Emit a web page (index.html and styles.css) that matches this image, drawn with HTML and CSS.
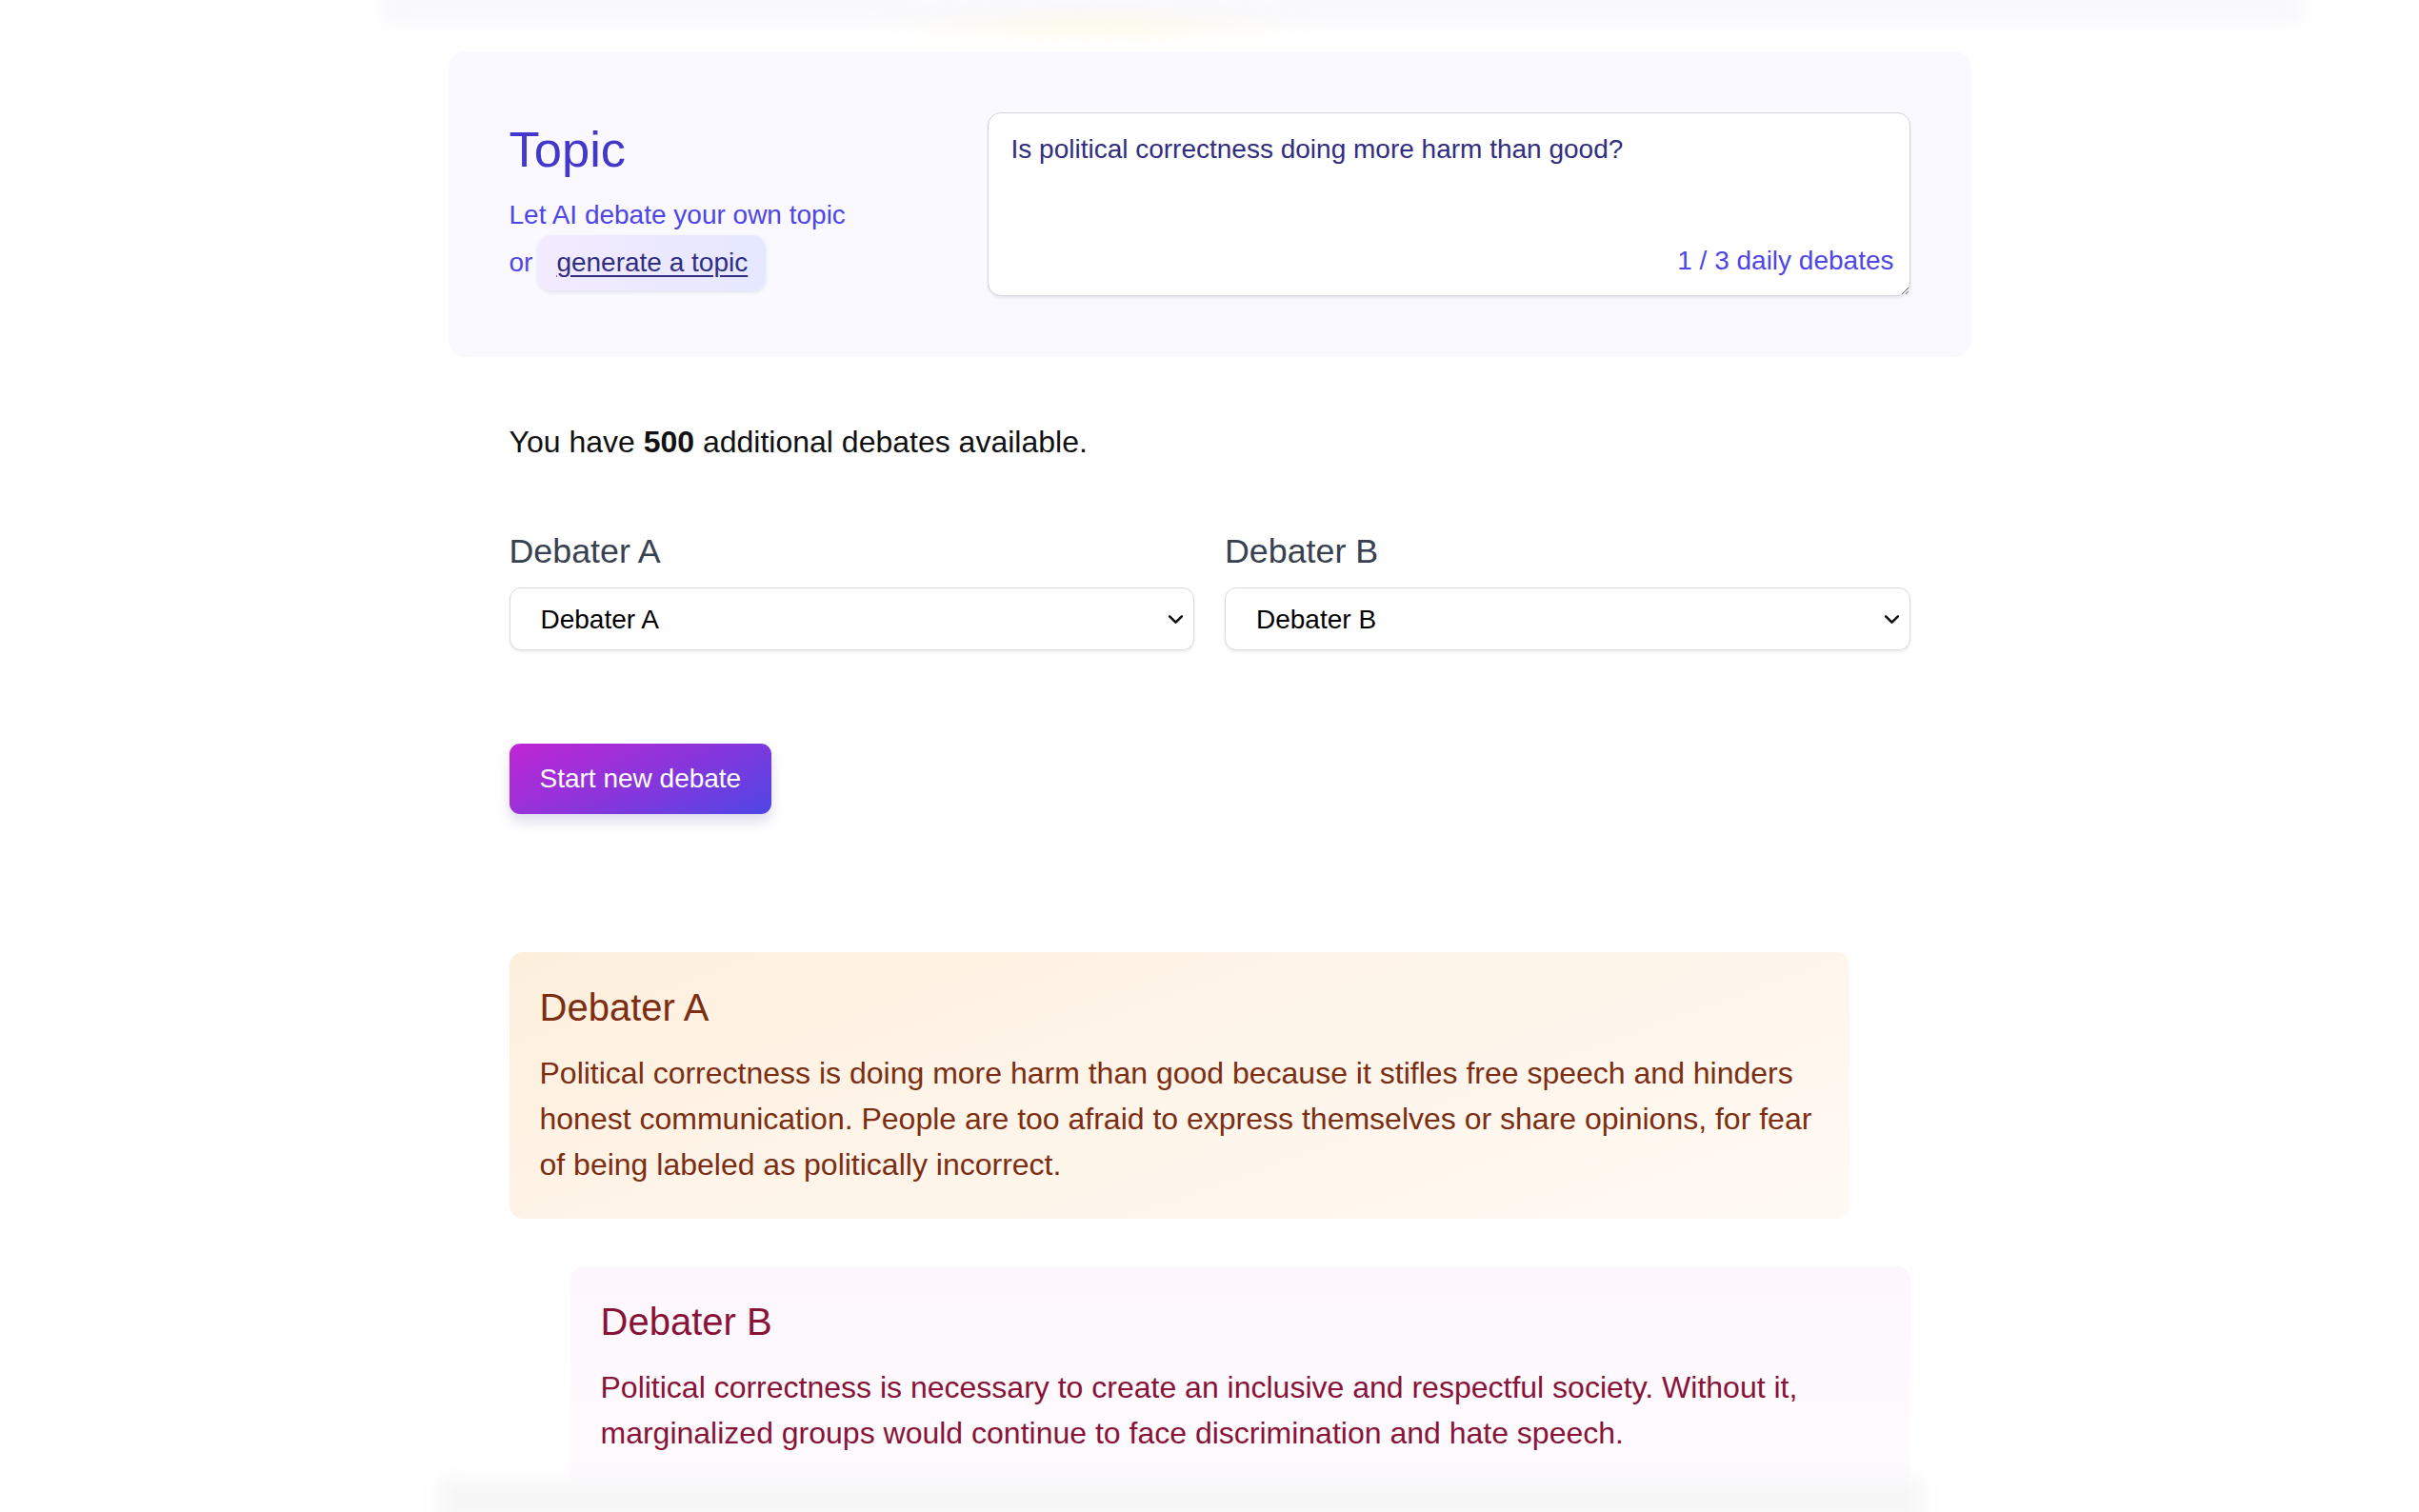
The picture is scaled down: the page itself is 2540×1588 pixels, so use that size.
FILE: index.html
```html
<!DOCTYPE html>
<html lang="en">
<head>
<meta charset="utf-8">
<title>AI Debate</title>
<link rel="stylesheet" href="styles.css">
</head>
<body>
<div class="top-blur"><div class="blob"></div></div>
<main class="page">
  <section class="topic-card">
    <div class="topic-intro">
      <h1 class="topic-title">Topic</h1>
      <p class="topic-sub">Let AI debate your own topic</p>
      <div class="topic-or"><span>or</span><a class="gen-pill" href="#">generate a topic</a></div>
    </div>
    <div class="topic-box">
      <textarea class="topic-input">Is political correctness doing more harm than good?</textarea>
      <span class="daily">1 / 3 daily debates</span>
    </div>
  </section>

  <p class="credits">You have <b>500</b> additional debates available.</p>

  <div class="debaters">
    <div class="field">
      <label class="field-label">Debater A</label>
      <div class="select-wrap">
        <select class="select"><option>Debater A</option></select>
        <svg class="chev" viewBox="0 0 16 10" width="16" height="10"><path d="M2 2 L8 8 L14 2" fill="none" stroke="#111" stroke-width="2.4" stroke-linecap="round" stroke-linejoin="round"/></svg>
      </div>
    </div>
    <div class="field">
      <label class="field-label">Debater B</label>
      <div class="select-wrap">
        <select class="select"><option>Debater B</option></select>
        <svg class="chev" viewBox="0 0 16 10" width="16" height="10"><path d="M2 2 L8 8 L14 2" fill="none" stroke="#111" stroke-width="2.4" stroke-linecap="round" stroke-linejoin="round"/></svg>
      </div>
    </div>
  </div>

  <button class="start-btn">Start new debate</button>

  <section class="transcript">
    <article class="turn turn-a">
      <h2 class="turn-name">Debater A</h2>
      <p class="turn-text">Political correctness is doing more harm than good because it stifles free speech and hinders honest communication. People are too afraid to express themselves or share opinions, for fear of being labeled as politically incorrect.</p>
    </article>
    <article class="turn turn-b">
      <h2 class="turn-name">Debater B</h2>
      <p class="turn-text">Political correctness is necessary to create an inclusive and respectful society. Without it, marginalized groups would continue to face discrimination and hate speech.</p>
    </article>
  </section>
</main>
<div class="bottom-blur"></div>
</body>
</html>
```

FILE: styles.css
```css
* { box-sizing: border-box; }
html, body { margin: 0; padding: 0; background: #ffffff; }
body {
  font-family: "Liberation Sans", Arial, sans-serif;
  color: #111;
  height: 1588px;
  overflow: hidden;
}

.top-blur {
  position: fixed;
  top: -6px;
  left: 400px;
  right: 120px;
  height: 40px;
  background: linear-gradient(180deg, #f7f7fb 0%, #f9f9fc 60%, rgba(255,255,255,0) 100%);
  filter: blur(10px);
  z-index: 5;
}
.top-blur .blob {
  position: absolute;
  left: 520px;
  top: 22px;
  width: 460px;
  height: 24px;
  background: radial-gradient(ellipse at center, rgba(255,246,214,0.9), rgba(255,255,255,0) 70%);
}

.page {
  width: 1471px;
  margin: 0 auto;
  padding-top: 54px;
}

.topic-card {
  margin: 0 -64px;
  padding: 64px;
  background: #f9f9ff;
  border-radius: 18px;
  display: grid;
  grid-template-columns: 1fr 969px;
  align-items: center;
}

.topic-intro { display: flex; flex-direction: column; }
.topic-title {
  margin: 0 0 17px;
  font-size: 52.5px;
  line-height: 63px;
  font-weight: 400;
  color: #4338ca;
}
.topic-sub {
  margin: 0;
  font-size: 28px;
  line-height: 42px;
  color: #4f46e5;
}
.topic-or {
  display: flex;
  align-items: center;
  gap: 6px;
  font-size: 28px;
  line-height: 42px;
  color: #4f46e5;
}
.gen-pill {
  display: inline-block;
  padding: 8px 19px;
  border-radius: 14px;
  background: linear-gradient(90deg, #f3ebff 0%, #e5e8ff 100%);
  box-shadow: 0 2px 4px rgba(60, 60, 120, 0.12);
  color: #312e81;
  text-decoration: underline;
  text-underline-offset: 4px;
  text-decoration-thickness: 2px;
}

.topic-box { position: relative; height: 193px; }
.topic-input {
  display: block;
  width: 100%;
  height: 193px;
  padding: 17px 24px 13px;
  border: 1px solid #d4d4dc;
  border-radius: 14px;
  background: #fff;
  box-shadow: 0 2px 3px rgba(0,0,0,0.08);
  font-family: "Liberation Sans", Arial, sans-serif;
  font-size: 28px;
  line-height: 42px;
  color: #312e81;
  resize: vertical;
  outline: none;
}
.daily {
  position: absolute;
  right: 17px;
  bottom: 16px;
  font-size: 28px;
  line-height: 42px;
  color: #4f46e5;
}

.credits {
  margin: 65px 0 0;
  font-size: 32px;
  line-height: 49px;
  color: #111;
}
.credits b { font-weight: 700; }

.debaters {
  margin-top: 66px;
  display: grid;
  grid-template-columns: 1fr 1fr;
  gap: 32px;
}
.field { display: flex; flex-direction: column; gap: 13px; }
.field-label {
  font-size: 35.8px;
  line-height: 49px;
  color: #374151;
}
.select-wrap { position: relative; }
.select {
  display: block;
  width: 100%;
  height: 66px;
  padding: 0 48px 0 32px;
  appearance: none;
  -webkit-appearance: none;
  border: 1px solid #dadade;
  border-radius: 12px;
  background: #fff;
  box-shadow: 0 2px 3px rgba(0,0,0,0.08);
  font-family: "Liberation Sans", Arial, sans-serif;
  font-size: 28px;
  color: #000;
}
.chev {
  position: absolute;
  right: 11px;
  top: 28px;
  width: 17px;
  height: 11px;
}

.start-btn {
  display: block;
  margin-top: 98px;
  height: 74px;
  padding: 0 32px;
  border: none;
  border-radius: 11px;
  background: linear-gradient(155deg, #c026d3 0%, #8b35db 50%, #4f46e5 100%);
  box-shadow: 0 8px 14px rgba(80, 60, 160, 0.18);
  font-family: "Liberation Sans", Arial, sans-serif;
  font-size: 28px;
  color: #fff;
}

.transcript {
  margin-top: 145px;
  display: flex;
  flex-direction: column;
  gap: 50px;
}
.turn {
  width: 1407px;
  padding: 30px 32px 33px;
  border-radius: 14px;
}
.turn-a {
  align-self: flex-start;
  background: linear-gradient(160deg, #fdefdc 0%, #fef5ea 50%, #fffaf3 100%);
  color: #7c2d12;
}
.turn-b {
  align-self: flex-end;
  background: linear-gradient(180deg, #fdf7fd 0%, #fefbfe 100%);
  color: #881337;
}
.turn-name {
  margin: 0 0 17px;
  font-size: 40px;
  line-height: 56px;
  font-weight: 400;
}
.turn-text {
  margin: 0;
  font-size: 32px;
  line-height: 48px;
}

.bottom-blur {
  position: fixed;
  left: 460px;
  width: 1560px;
  bottom: -14px;
  height: 50px;
  background: #f7f7f8;
  filter: blur(10px);
  z-index: 5;
}
```
